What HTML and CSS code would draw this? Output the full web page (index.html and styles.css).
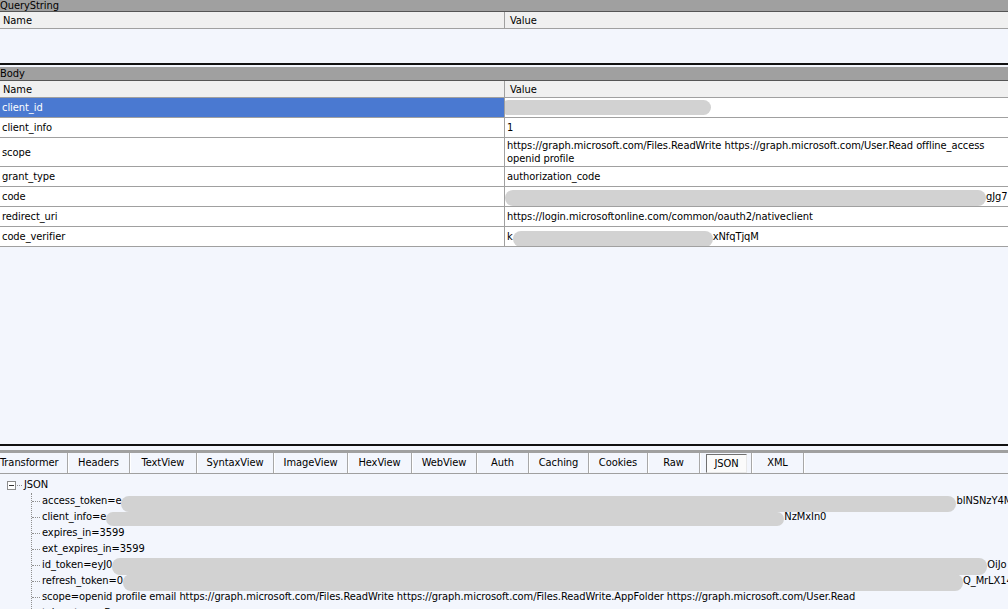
FILE: index.html
```html
<!DOCTYPE html>
<html>
<head>
<meta charset="utf-8">
<title>Inspector</title>
<link rel="stylesheet" href="styles.css">
</head>
<body>
<div class="page">
  <section class="panel qs">
    <div class="title qs-title">QueryString</div>
    <div class="grid-head"><div class="hname">Name</div><div class="hvalue">Value</div></div>
    <div class="qs-empty"></div>
  </section>
  <div class="splitter"></div>
  <section class="panel body-panel">
    <div class="title body-title">Body</div>
    <div class="grid-head"><div class="hname">Name</div><div class="hvalue">Value</div></div>
    <div class="row">
      <div class="name sel">client_id</div>
      <div class="value"><span class="blob b-cid"></span></div>
    </div>
    <div class="row">
      <div class="name">client_info</div>
      <div class="value">1</div>
    </div>
    <div class="row tall">
      <div class="name">scope</div>
      <div class="value multi">https://graph.microsoft.com/Files.ReadWrite https://graph.microsoft.com/User.Read offline_access<br>openid profile</div>
    </div>
    <div class="row">
      <div class="name">grant_type</div>
      <div class="value">authorization_code</div>
    </div>
    <div class="row">
      <div class="name">code</div>
      <div class="value"><span class="blob b-code"></span>gJg7</div>
    </div>
    <div class="row">
      <div class="name">redirect_uri</div>
      <div class="value">https://login.microsoftonline.com/common/oauth2/nativeclient</div>
    </div>
    <div class="row">
      <div class="name">code_verifier</div>
      <div class="value">k<span class="blob b-cv"></span>xNfqTjqM</div>
    </div>
    <div class="body-empty"></div>
  </section>
  <div class="splitter lower"></div>
  <nav class="tabs">
    <div class="tab t-transformer">Transformer</div>
    <div class="tab t-headers">Headers</div>
    <div class="tab t-textview">TextView</div>
    <div class="tab t-syntax">SyntaxView</div>
    <div class="tab t-image">ImageView</div>
    <div class="tab t-hex">HexView</div>
    <div class="tab t-web">WebView</div>
    <div class="tab t-auth">Auth</div>
    <div class="tab t-caching">Caching</div>
    <div class="tab t-cookies">Cookies</div>
    <div class="tab t-raw">Raw</div>
    <div class="tab t-json"><span class="active">JSON</span></div>
    <div class="tab t-xml">XML</div>
  </nav>
  <div class="tree">
    <div class="root"><span class="toggle"></span><span class="rootdots"></span>JSON</div>
    <div class="children">
      <div class="node">access_token=e<span class="blob b-at"></span>blNSNzY4MC</div>
      <div class="node">client_info=e<span class="blob b-ci"></span>NzMxIn0</div>
      <div class="node">expires_in=3599</div>
      <div class="node">ext_expires_in=3599</div>
      <div class="node">id_token=eyJ0<span class="blob b-id"></span>OiJo</div>
      <div class="node">refresh_token=0<span class="blob b-rt"></span>Q_MrLX14g</div>
      <div class="node">scope=openid profile email https://graph.microsoft.com/Files.ReadWrite https://graph.microsoft.com/Files.ReadWrite.AppFolder https://graph.microsoft.com/User.Read</div>
      <div class="node">token_type=Bearer</div>
    </div>
  </div>
</div>
</body>
</html>
```
FILE: styles.css
```css
html, body {
  margin: 0;
  padding: 0;
}
body {
  width: 1008px;
  height: 609px;
  overflow: hidden;
  background: #f3f6fd;
  font-family: "DejaVu Sans Condensed", "DejaVu Sans", sans-serif;
  font-size: 11px;
  letter-spacing: -0.06px;
  color: #000;
}
.page {
  display: flex;
  flex-direction: column;
  height: 609px;
  overflow: hidden;
}
.page > * {
  flex-shrink: 0;
}
.panel {
  display: flex;
  flex-direction: column;
}
.panel > * {
  flex-shrink: 0;
}
.title {
  background: #a0a0a0;
  border-bottom: 1px solid #555;
  overflow: hidden;
  white-space: nowrap;
  color: #000;
}
.qs-title {
  height: 12px;
  line-height: 11px;
  box-sizing: border-box;
}
.body-title {
  height: 14px;
  line-height: 13px;
  box-sizing: border-box;
}
.grid-head {
  display: flex;
  height: 17px;
  box-sizing: border-box;
  background: #f0f0f0;
  border-bottom: 1px solid #a0a0a0;
  line-height: 16px;
}
.hname {
  width: 505px;
  box-sizing: border-box;
  border-right: 1px solid #a0a0a0;
  padding-left: 3px;
  padding-top: 1px;
}
.hvalue {
  flex: 1;
  padding-left: 5px;
  padding-top: 1px;
}
.qs-empty {
  height: 34px;
}
.splitter {
  height: 2px;
  background: #111;
  margin-bottom: 2px;
}
.splitter.lower {
  margin-bottom: 4px;
}
.page > .body-panel {
  flex: 1 1 auto;
  min-height: 0;
}
.row {
  display: flex;
  height: 20px;
  box-sizing: border-box;
  border-bottom: 1px solid #a0a0a0;
  background: #fff;
  white-space: nowrap;
}
.row.tall {
  height: 29px;
}
.name {
  width: 505px;
  box-sizing: border-box;
  border-right: 1px solid #a0a0a0;
  padding-left: 2px;
  line-height: 19px;
  display: flex;
  align-items: center;
}
.name.sel {
  background: #4a79d1;
  color: #fff;
}
.value {
  flex: 1;
  padding-left: 2px;
  line-height: 19px;
  overflow: hidden;
  white-space: nowrap;
}
.value.multi {
  line-height: 13px;
  padding-top: 1px;
}
.panel > .body-empty {
  flex: 1 1 auto;
}
.blob {
  display: inline-block;
  vertical-align: top;
  background: #d2d2d2;
  border-radius: 8px;
}
.b-cid { width: 210px; height: 15px; margin-top: 2px; margin-left: -6px; }
.b-code { width: 481px; height: 16px; margin-top: 3px; margin-left: -2px; }
.b-cv { width: 200px; height: 16px; margin-top: 4px; }
.b-at { width: 835px; height: 16px; margin-top: 3px; }
.b-ci { width: 678px; height: 14px; margin-top: 3px; }
.b-id { width: 875px; height: 17px; margin-top: 1px; }
.b-rt { width: 840px; height: 17px; margin-top: 1px; }

.tabs {
  display: flex;
  height: 24px;
  box-sizing: border-box;
  border-top: 3px solid #a0a0a0;
  border-bottom: 1px solid #a0a0a0;
  white-space: nowrap;
}
.tab {
  height: 20px;
  line-height: 19px;
  text-align: center;
  box-sizing: border-box;
  border-right: 1px solid #a8a8a8;
  box-shadow: 1px 0 0 #fff;
  flex: none;
}
.t-transformer { width: 68px; text-align: left; }
.t-headers { width: 62px; }
.t-textview { width: 67px; }
.t-syntax { width: 77px; }
.t-image { width: 74px; }
.t-hex { width: 64px; }
.t-web { width: 65px; }
.t-auth { width: 52px; }
.t-caching { width: 60px; }
.t-cookies { width: 59px; }
.t-raw { width: 52px; }
.t-json { width: 52px; padding-left: 6px; padding-right: 4px; }
.t-xml { width: 52px; }
.active {
  display: block;
  height: 19px;
  margin-top: 1px;
  line-height: 17px;
  box-sizing: border-box;
  border-left: 1px solid #707070;
  border-top: 1px solid #707070;
  border-right: 1px solid #e8e8e8;
  border-bottom: 1px solid #e8e8e8;
  background: #fbfbfb;
}

.tree {
  height: 135px;
  overflow: hidden;
  box-sizing: border-box;
  padding-top: 3px;
  white-space: nowrap;
  line-height: 16px;
}
.root {
  height: 16px;
  padding-left: 7px;
  display: flex;
  align-items: center;
}
.toggle {
  position: relative;
  display: inline-block;
  width: 9px;
  height: 9px;
  box-sizing: border-box;
  border: 1px solid #8c8c8c;
  background: #fff;
}
.toggle::after {
  content: "";
  position: absolute;
  left: 1px;
  top: 3px;
  width: 5px;
  height: 1px;
  background: #333;
}
.rootdots {
  display: inline-block;
  width: 5px;
  margin-left: 1px;
  margin-right: 2px;
  border-top: 1px dotted #909090;
}
.children {
  margin-left: 31px;
  border-left: 1px dotted #909090;
}
.node {
  height: 16px;
  overflow: visible;
}
.node::before {
  content: "";
  display: inline-block;
  width: 8px;
  margin-right: 2px;
  vertical-align: middle;
  border-top: 1px dotted #909090;
}
```
